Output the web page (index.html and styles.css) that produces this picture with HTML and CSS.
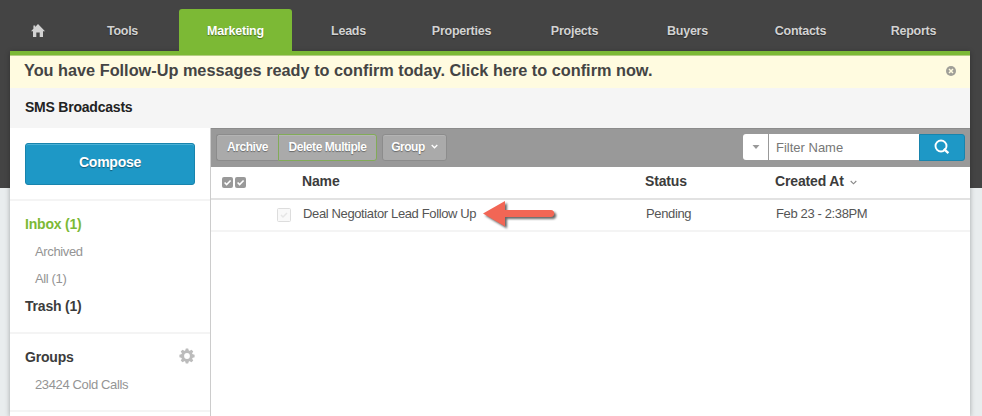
FILE: index.html
```
<!DOCTYPE html>
<html lang="en">
<head>
  <meta charset="UTF-8">
  <title>SMS Broadcasts</title>
  <link rel="stylesheet" href="styles.css">
</head>
<body>
  <div class="container">
    <nav class="nav">
      <a class="home" aria-label="Home">
        <svg width="14" height="14" viewBox="0 0 14 14"><path d="M7 0 14 7.2H12V13H8.7V8.5H5.3V13H2V7.2H0L2.4 4.7V1.5H4.2V2.9Z" fill="#d2d2d2"/></svg>
      </a>
      <a>Tools</a>
      <a class="active">Marketing</a>
      <a>Leads</a>
      <a>Properties</a>
      <a>Projects</a>
      <a>Buyers</a>
      <a>Contacts</a>
      <a>Reports</a>
    </nav>
    <div class="page">
      <div class="notice">
        <span>You have Follow-Up messages ready to confirm today. Click here to confirm now.</span>
        <svg width="10" height="10" viewBox="0 0 10 10"><circle cx="5" cy="5" r="5" fill="#a09f98"/><path d="M3 3 7 7M7 3 3 7" stroke="#fffbe0" stroke-width="1.5"/></svg>
      </div>
      <h1 class="title">SMS Broadcasts</h1>
      <div class="columns">
        <div class="sidebar">
          <div class="section compose-box"><button class="compose">Compose</button></div>
          <div class="section folders">
            <a class="folder current">Inbox (1)</a>
            <a class="sub">Archived</a>
            <a class="sub">All (1)</a>
            <a class="folder">Trash (1)</a>
          </div>
          <div class="section groups">
            <div class="groups-head">
              <a class="folder">Groups</a>
              <svg width="16" height="16" viewBox="-8 -8 16 16">
                <g fill="#bcbcbc">
                  <path d="M-1.9-5-1.2-7.6H1.2L1.9-5V5L1.2 7.6H-1.2L-1.9 5Z"/>
                  <path transform="rotate(45)" d="M-1.9-5-1.2-7.6H1.2L1.9-5V5L1.2 7.6H-1.2L-1.9 5Z"/>
                  <path transform="rotate(90)" d="M-1.9-5-1.2-7.6H1.2L1.9-5V5L1.2 7.6H-1.2L-1.9 5Z"/>
                  <path transform="rotate(135)" d="M-1.9-5-1.2-7.6H1.2L1.9-5V5L1.2 7.6H-1.2L-1.9 5Z"/>
                  <circle r="5.7"/>
                </g>
                <circle r="2.9" fill="#fff"/>
              </svg>
            </div>
            <a class="sub">23424 Cold Calls</a>
          </div>
        </div>
        <div class="main">
          <div class="toolbar">
            <div class="btn-group">
              <button class="btn archive">Archive</button>
              <button class="btn delete">Delete Multiple</button>
            </div>
            <button class="btn group">Group
              <svg width="7" height="5" viewBox="0 0 7 5"><path d="M.7 1 3.5 3.8 6.3 1" fill="none" stroke="#fff" stroke-width="1.3"/></svg>
            </button>
            <div class="filter">
              <button class="filter-menu" aria-label="Filter by"><svg width="8" height="4" viewBox="0 0 8 4"><path d="M.5 0H7.5L4 4Z" fill="#999"/></svg></button>
              <input type="text" placeholder="Filter Name">
              <button class="search" aria-label="Search"><svg width="16" height="16" viewBox="0 0 16 16"><circle cx="7" cy="7" r="5.5" fill="none" stroke="#fff" stroke-width="1.9"/><path d="m9.8 9.8 4.6 4.4" stroke="#fff" stroke-width="2.3"/></svg></button>
            </div>
          </div>
          <div class="row head">
            <div class="select">
              <svg width="11" height="11" viewBox="0 0 11 11"><rect width="11" height="11" rx="2" fill="#999"/><path d="m2.6 5.5 2 2 4-4" fill="none" stroke="#fff" stroke-width="1.6"/></svg>
              <svg width="11" height="11" viewBox="0 0 11 11"><rect width="11" height="11" rx="2" fill="#999"/><path d="m2.6 5.5 2 2 4-4" fill="none" stroke="#fff" stroke-width="1.6"/></svg>
            </div>
            <div>Name</div>
            <div>Status</div>
            <div>Created At <svg width="7" height="5" viewBox="0 0 7 5"><path d="M.7 1 3.5 3.8 6.3 1" fill="none" stroke="#888" stroke-width="1.1"/></svg></div>
          </div>
          <div class="row item">
            <div class="check">
              <svg width="14" height="14" viewBox="0 0 14 14"><rect x=".5" y=".5" width="13" height="13" rx="1" fill="#f9f9f9" stroke="#ddd"/><path d="m4 7 2 2 4-4" fill="none" stroke="#e6e6e6" stroke-width="1.5"/></svg>
            </div>
            <div class="name">Deal Negotiator Lead Follow Up
              <svg class="arrow" width="78" height="34" viewBox="0 0 78 34"><path d="M3 15.5 25 3V12H71Q74 12.3 74.3 15.5 74 18.7 71 19H25V28.5Z" fill="#f26655"/></svg>
            </div>
            <div>Pending</div>
            <div>Feb 23 - 2:38PM</div>
          </div>
        </div>
      </div>
    </div>
  </div>
</body>
</html>
```
FILE: styles.css
```
* { box-sizing: border-box; }
body {
  margin: 0;
  height: 416px;
  overflow: hidden;
  font-family: "Liberation Sans", Arial, sans-serif;
  font-size: 13px;
  letter-spacing: -0.37px;
  color: #555;
  background: linear-gradient(#444 188px, #e9edee 188px);
}
svg { display: block; flex: none; }
button, input { font-family: inherit; }
.container {
  width: 960px;
  margin: 0 auto 0 10px;
}
.nav {
  display: flex;
  height: 51px;
  padding-top: 9px;
}
.nav a {
  width: 113px;
  line-height: 44px;
  text-align: center;
  font-weight: bold;
  font-size: 12.5px;
  letter-spacing: -0.25px;
  color: #d2d2d2;
  text-shadow: 0 1px 1px rgba(0,0,0,0.4);
}
.nav .home {
  width: 56px;
  padding: 15px 0 0 21px;
}
.nav .active {
  color: #fff;
  background: #7cb935;
  border-radius: 3px 3px 0 0;
}
.page {
  height: 365px;
  background: #fff;
  border-top: 4px solid #7cb935;
  box-shadow: 0 1px 5px rgba(0,0,0,0.3);
}
.notice {
  display: flex;
  align-items: center;
  justify-content: space-between;
  height: 33px;
  padding: 0 14px 2px;
  font-size: 16.3px;
  font-weight: bold;
  letter-spacing: 0;
  color: #444;
  background: #fffbe0;
  box-shadow: inset 0 1px #b5cd82;
}
.title {
  margin: 0;
  height: 40px;
  padding-left: 15px;
  line-height: 38px;
  font-size: 14px;
  letter-spacing: -0.22px;
  color: #222;
  background: #f5f5f5;
}
.columns {
  display: flex;
  height: 288px;
}
.sidebar { width: 200px; }
.section { border-bottom: 2px solid #f4f4f4; }
.compose-box {
  height: 73px;
  padding: 15px;
}
.compose {
  display: block;
  width: 170px;
  height: 42px;
  padding: 0 0 4px;
  font-size: 14px;
  font-weight: bold;
  letter-spacing: -0.25px;
  color: #fff;
  background: #1e98c6;
  border: 1px solid #1884ad;
  border-radius: 3px;
  box-shadow: inset 0 1px #4bb1d6;
  text-shadow: 0 1px 1px rgba(0,0,0,0.4);
}
.folders {
  height: 133px;
  padding: 9px 15px 0;
}
.folder, .sub {
  display: block;
  line-height: 28px;
  white-space: nowrap;
}
.folder {
  font-size: 14px;
  font-weight: bold;
  letter-spacing: -0.2px;
  color: #3c3c3c;
}
.current { color: #7cb935; }
.sub {
  padding-left: 10px;
  line-height: 27px;
  color: #949494;
}
.groups {
  height: 78px;
  padding: 9px 15px 0;
}
.groups-head {
  display: flex;
  align-items: center;
  justify-content: space-between;
}
.groups-head svg { margin-top: -2px; }
.main {
  flex: 1;
  min-width: 0;
  border-left: 1px solid #ccc;
}
.toolbar {
  display: flex;
  height: 39px;
  padding: 5px 5px 6px;
  background: #999;
  border-top: 1px solid #8c8c8c;
}
.btn-group { display: flex; }
.btn {
  height: 27px;
  padding: 0 0 2px;
  font-size: 12px;
  font-weight: bold;
  letter-spacing: -0.45px;
  white-space: nowrap;
  color: #fff;
  background: #aaa;
  border: 1px solid #8c8c8c;
  border-radius: 3px;
  box-shadow: inset 0 1px #b4b4b4;
  text-shadow: 0 1px 1px rgba(0,0,0,0.4);
}
.archive {
  width: 62px;
  border-right: 0;
  border-radius: 3px 0 0 3px;
}
.delete {
  width: 99px;
  border-color: #82ab58;
  border-radius: 0 3px 3px 0;
}
.group {
  display: flex;
  align-items: center;
  justify-content: center;
  gap: 6px;
  width: 65px;
  margin-left: 5px;
}
.filter {
  display: flex;
  margin-left: auto;
}
.filter-menu {
  display: flex;
  align-items: center;
  justify-content: center;
  width: 26px;
  height: 26px;
  padding: 0;
  background: #fff;
  border: 0;
  border-right: 1px solid #999;
  border-radius: 3px 0 0 3px;
}
.filter input {
  width: 150px;
  height: 26px;
  padding: 0 7px;
  font-size: 13px;
  border: 0;
  border-radius: 0;
}
.filter input::placeholder { color: #777; }
.search {
  display: flex;
  align-items: center;
  justify-content: center;
  width: 46px;
  height: 27px;
  padding: 0 0 1px;
  background: #1e98c6;
  border: 1px solid #1884ad;
  border-radius: 0 3px 3px 0;
}
.row {
  display: grid;
  grid-template-columns: 91px 343px 130px 1fr;
  white-space: nowrap;
}
.head {
  height: 33px;
  line-height: 28px;
  font-size: 14px;
  font-weight: bold;
  letter-spacing: -0.15px;
  color: #3c3c3c;
  border-bottom: 2px solid #e2e2e2;
}
.head svg {
  display: inline-block;
  margin-left: 2px;
  vertical-align: 1px;
}
.head .select svg { margin: 0; }
.select {
  display: flex;
  align-items: center;
  gap: 2px;
  padding-left: 11px;
}
.item {
  height: 32px;
  padding-left: 1px;
  line-height: 28px;
  border-bottom: 2px solid #f4f4f4;
}
.check { padding: 8px 0 0 65px; }
.name { position: relative; }
.arrow {
  position: absolute;
  left: 177px;
  top: -2px;
  filter: drop-shadow(2px 2px 1px rgba(0,0,0,0.6));
}
```
